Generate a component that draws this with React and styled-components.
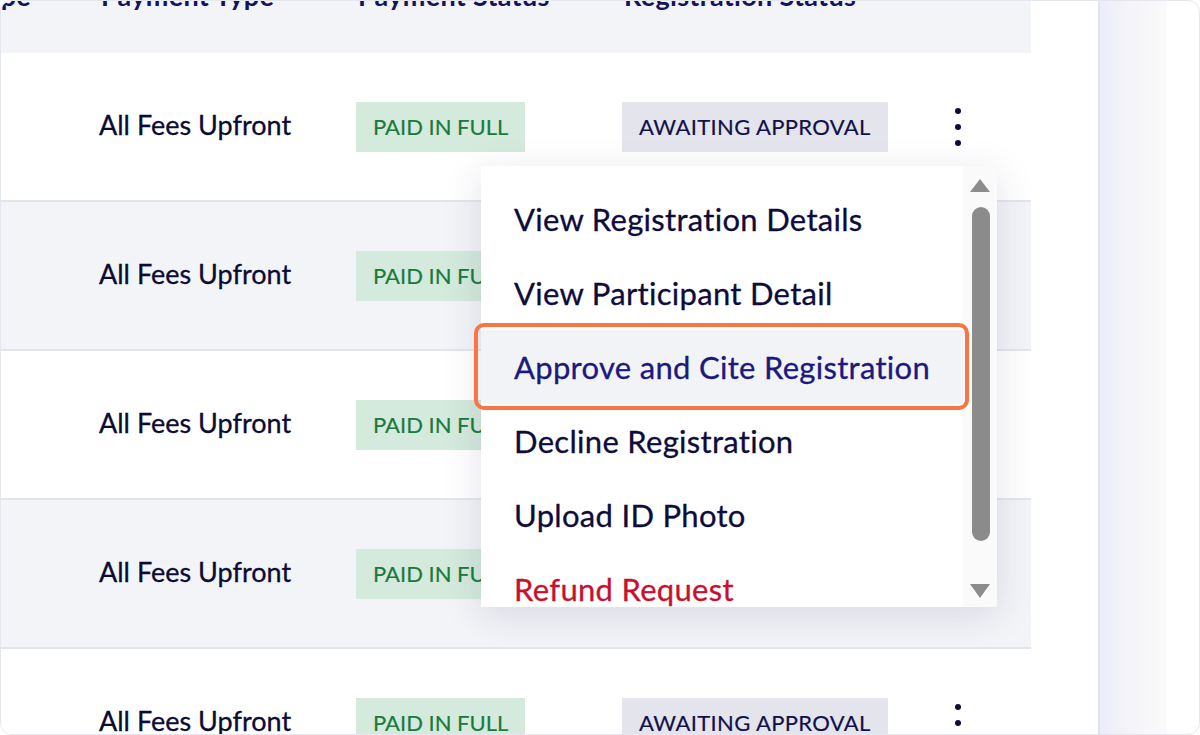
import styled, { createGlobalStyle } from "styled-components";

const GlobalStyle = createGlobalStyle`
  html, body {
    margin: 0;
    padding: 0;
    background: #fff;
  }
  body {
    font-family: Lato, "Noto Sans", sans-serif;
  }
  #root {
    width: 1200px;
    height: 735px;
  }
`;

const rows = [0, 1, 2, 3, 4];

const menuItems = [
    { label: "View Registration Details" },
    { label: "View Participant Detail" },
    { label: "Approve and Cite Registration", active: true },
    { label: "Decline Registration" },
    { label: "Upload ID Photo" },
    { label: "Refund Request", danger: true },
];

export default function App() {
    return (
        <>
            <GlobalStyle />
            <SFrame>
                <STable>
                    <SHeaderRow>
                        <SHeaderCell $first>Participant Type</SHeaderCell>
                        <SHeaderCell>Payment Type</SHeaderCell>
                        <SHeaderCell>Payment Status</SHeaderCell>
                        <SHeaderCell>Registration Status</SHeaderCell>
                        <span />
                    </SHeaderRow>

                    {rows.map((i) => (
                        <SRow key={i} $alt={i % 2 === 1}>
                            <span />
                            <SText>All Fees Upfront</SText>
                            <div>
                                <SBadge $tone="paid">PAID IN FULL</SBadge>
                            </div>
                            <div>
                                <SBadge $tone="waiting">AWAITING APPROVAL</SBadge>
                            </div>
                            <SKebab aria-label="actions">
                                <SDot />
                                <SDot />
                                <SDot />
                            </SKebab>
                        </SRow>
                    ))}

                    <SMenu>
                        <SMenuList>
                            {menuItems.map((item) => (
                                <SMenuItem key={item.label} $active={item.active} $danger={item.danger}>
                                    {item.label}
                                </SMenuItem>
                            ))}
                        </SMenuList>
                        <SScrollbar>
                            <SArrowUp />
                            <SThumb />
                            <SArrowDown />
                        </SScrollbar>
                    </SMenu>
                </STable>

                <SGap />
                <SStrip />
                <SRest />
            </SFrame>
        </>
    );
}

const SFrame = styled.div`
    position: relative;
    display: flex;
    width: 1200px;
    height: 735px;
    box-sizing: border-box;
    border: 1px solid #e6e6ee;
    border-radius: 12px;
    overflow: hidden;
    background: #fff;
`;

const STable = styled.div`
    position: relative;
    flex: none;
    width: 1030px;
`;

const cols = "98px 257px 266px 318px 1fr";

const SHeaderRow = styled.div`
    display: grid;
    grid-template-columns: ${cols};
    align-items: start;
    height: 52px;
    background: #f3f4f7;
`;

const SHeaderCell = styled.div`
    display: flex;
    justify-content: ${(p) => (p.$first ? "flex-end" : "flex-start")};
    padding-right: ${(p) => (p.$first ? "68px" : "0")};
    padding-left: ${(p) => (p.$first ? "0" : "2px")};
    margin-top: -19px;
    font-size: 27px;
    line-height: 27px;
    font-weight: 700;
    letter-spacing: 0.3px;
    color: #14145e;
    white-space: nowrap;
    min-width: 0;
`;

const SRow = styled.div`
    display: grid;
    grid-template-columns: ${cols};
    align-items: center;
    height: 147px;
    border-bottom: 2px solid #e4e5eb;
    background: ${(p) => (p.$alt ? "#f3f4f7" : "#fff")};
`;

const SText = styled.div`
    margin-top: -4px;
    font-size: 27px;
    color: #0c0b33;
    white-space: nowrap;
    -webkit-text-stroke: 0.3px #0c0b33;
`;

const SBadge = styled.span`
    display: inline-flex;
    align-items: center;
    box-sizing: border-box;
    height: 50px;
    padding: 0 17px;
    font-size: 22px;
    white-space: nowrap;
    background: ${(p) => (p.$tone === "paid" ? "#d3eadc" : "#e4e5ec")};
    color: ${(p) => (p.$tone === "paid" ? "#1a7a3c" : "#11114a")};
    letter-spacing: ${(p) => (p.$tone === "paid" ? "0" : "0.35px")};
    -webkit-text-stroke: 0.2px currentColor;
`;

const SKebab = styled.div`
    justify-self: start;
    width: 36px;
    display: flex;
    flex-direction: column;
    align-items: center;
    gap: 10px;
`;

const SDot = styled.span`
    width: 6px;
    height: 6px;
    border-radius: 50%;
    background: #0d0d3a;
`;

const SMenu = styled.div`
    position: absolute;
    top: 165px;
    left: 480px;
    width: 516px;
    height: 441px;
    display: flex;
    background: #fff;
    box-shadow: 0 8px 36px rgba(40, 40, 100, 0.13);
    z-index: 10;
`;

const SMenuList = styled.div`
    flex: 1;
    padding-top: 16px;
    clip-path: inset(0 -20px);
`;

const SMenuItem = styled.div`
    position: relative;
    display: flex;
    align-items: center;
    height: 74px;
    padding-left: 33px;
    font-size: 31px;
    letter-spacing: 0.3px;
    white-space: nowrap;
    color: ${(p) => (p.$danger ? "#c8102e" : p.$active ? "#1b1a7c" : "#0d0c3b")};
    -webkit-text-stroke: 0.3px currentColor;
    background: ${(p) => (p.$active ? "#f2f3f6" : "transparent")};

    &::after {
        content: "";
        display: ${(p) => (p.$active ? "block" : "none")};
        position: absolute;
        top: -7px;
        bottom: -6px;
        left: -7px;
        right: -6px;
        border: 4px solid #fb7444;
        border-radius: 10px;
    }
`;

const SScrollbar = styled.div`
    flex: none;
    width: 34px;
    display: flex;
    flex-direction: column;
    align-items: center;
    padding: 13px 0 9px;
    box-sizing: border-box;
    background: #fafafa;
`;

const SArrowUp = styled.span`
    width: 0;
    height: 0;
    border-left: 10px solid transparent;
    border-right: 10px solid transparent;
    border-bottom: 13px solid #8c8c8c;
`;

const SThumb = styled.span`
    margin-top: 15px;
    margin-left: 2px;
    width: 18px;
    height: 334px;
    border-radius: 9px;
    background: #8b8b8b;
`;

const SArrowDown = styled.span`
    margin-top: auto;
    width: 0;
    height: 0;
    border-left: 10px solid transparent;
    border-right: 10px solid transparent;
    border-top: 14px solid #8c8c8c;
`;

const SGap = styled.div`
    flex: none;
    width: 67px;
`;

const SStrip = styled.div`
    flex: none;
    width: 67px;
    border-left: 2px solid #e2e3ea;
    background: linear-gradient(90deg, #eceef8, #f5f5f9 50%, #fafafa);
`;

const SRest = styled.div`
    flex: 1;
`;
